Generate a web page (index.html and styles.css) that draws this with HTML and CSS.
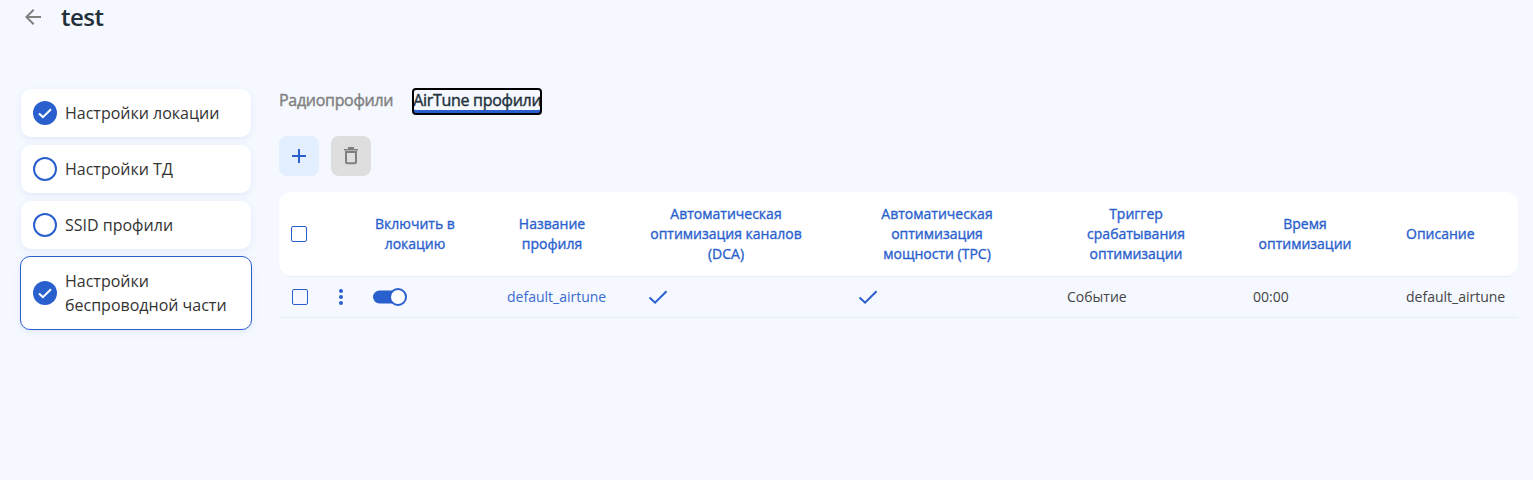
FILE: index.html
```html
<!DOCTYPE html>
<html lang="ru">
<head>
<meta charset="utf-8">
<title>test</title>
<link rel="stylesheet" href="styles.css">
</head>
<body>
<header class="top">
  <svg class="back" viewBox="0 0 24 24" width="24" height="24"><path d="M20 11H7.83l5.59-5.59L12 4l-8 8 8 8 1.41-1.41L7.83 13H20v-2z"/></svg>
  <h1 class="title">test</h1>
</header>
<div class="main">
  <nav class="side">
    <div class="step">
      <svg class="mark" viewBox="0 0 24 24" width="24" height="24"><circle cx="12" cy="12" r="12" class="fill"/><path d="M6 12.6l3.9 3.5 8.1-7.8" class="tick"/></svg>
      <span>Настройки локации</span>
    </div>
    <div class="step">
      <svg class="mark" viewBox="0 0 24 24" width="24" height="24"><circle cx="12" cy="12" r="11" class="ring"/></svg>
      <span>Настройки ТД</span>
    </div>
    <div class="step">
      <svg class="mark" viewBox="0 0 24 24" width="24" height="24"><circle cx="12" cy="12" r="11" class="ring"/></svg>
      <span>SSID профили</span>
    </div>
    <div class="step step-active">
      <svg class="mark" viewBox="0 0 24 24" width="24" height="24"><circle cx="12" cy="12" r="12" class="fill"/><path d="M6 12.6l3.9 3.5 8.1-7.8" class="tick"/></svg>
      <span>Настройки беспроводной части</span>
    </div>
  </nav>
  <section class="content">
    <div class="tabs">
      <span class="tab">Радиопрофили</span>
      <span class="tab tab-active">AirTune профили</span>
    </div>
    <div class="actions">
      <button class="btn btn-add" type="button"><svg viewBox="0 0 16 16" width="16" height="16"><path d="M8 1v14M1 8h14" class="plus"/></svg></button>
      <button class="btn btn-del" type="button"><svg viewBox="0 0 24 24" width="24" height="24"><path d="M5 5h14v1.6H5zM9 3h6v2H9z" class="bin-top"/><path d="M7 8h10v10.3a1 1 0 0 1-1 1H8a1 1 0 0 1-1-1z" class="bin"/></svg></button>
    </div>
    <table class="grid">
      <colgroup>
        <col class="c1"><col class="c2"><col class="c3"><col class="c4"><col class="c5"><col class="c6"><col class="c7"><col class="c8"><col class="c9">
      </colgroup>
      <thead>
        <tr>
          <th class="first"><span class="box box-head"></span></th>
          <th></th>
          <th>Включить в<br>локацию</th>
          <th>Название<br>профиля</th>
          <th>Автоматическая<br>оптимизация каналов<br>(DCA)</th>
          <th>Автоматическая<br>оптимизация<br>мощности (TPC)</th>
          <th>Триггер<br>срабатывания<br>оптимизации</th>
          <th>Время<br>оптимизации</th>
          <th class="last">Описание</th>
        </tr>
      </thead>
      <tbody>
        <tr>
          <td><span class="box box-row"></span></td>
          <td class="dots-cell"><svg viewBox="0 0 4 16" width="4" height="16"><circle cx="2" cy="2" r="2" class="dot"/><circle cx="2" cy="8" r="2" class="dot"/><circle cx="2" cy="14" r="2" class="dot"/></svg></td>
          <td class="toggle-cell"><svg viewBox="0 0 34 20" width="34" height="20"><rect x="0" y="3.5" width="28" height="13" rx="6.5" class="track"/><circle cx="25" cy="10" r="8" class="knob"/></svg></td>
          <td class="link p-name">default_airtune</td>
          <td class="p-dca"><svg class="ok" viewBox="0 0 20 16" width="20" height="16"><path d="M1.5 8.5l5.6 5.2L18.5 2.2"/></svg></td>
          <td class="p-tpc"><svg class="ok" viewBox="0 0 20 16" width="20" height="16"><path d="M1.5 8.5l5.6 5.2L18.5 2.2"/></svg></td>
          <td class="p-trig">Событие</td>
          <td class="p-time">00:00</td>
          <td class="p-desc">default_airtune</td>
        </tr>
      </tbody>
    </table>
  </section>
</div>
</body>
</html>
```
FILE: styles.css
```css
* { box-sizing: border-box; }
html, body { margin: 0; height: 100%; }
body {
  background: #f5f8ff;
  color: #333;
  font-family: "Open Sans", sans-serif;
  overflow: hidden;
}
.top {
  display: flex;
  align-items: center;
  gap: 16px;
  height: 34px;
  padding-left: 21px;
}
.back { fill: #808080; flex: none; }
.title {
  margin: 0;
  font-size: 24px;
  line-height: 34px;
  font-weight: 600;
  letter-spacing: -0.5px;
  color: #22303a;
}
.main {
  display: flex;
  margin-top: 55px;
  padding-left: 21px;
  padding-right: 15px;
}
.side {
  flex: none;
  width: 230px;
  display: flex;
  flex-direction: column;
  gap: 8px;
  margin-right: 28px;
}
.step {
  display: flex;
  align-items: center;
  gap: 8px;
  min-height: 48px;
  padding: 0 12px;
  background: #fff;
  border-radius: 10px;
  box-shadow: 0 2px 6px rgba(42, 95, 206, .1);
  font-size: 16px;
  line-height: 24px;
}
.step-active {
  min-height: 74px;
  margin: -1px -1px 0;
  padding: 0 12px;
  border: 1px solid #2a5fce;
}
.mark { flex: none; }
.fill { fill: #2a5fce; }
.ring { fill: none; stroke: #2a5fce; stroke-width: 2; }
.tick { fill: none; stroke: #fff; stroke-width: 2; }
.content { flex: 1; min-width: 0; }
.tabs {
  display: flex;
  gap: 20px;
  height: 25px;
  align-items: center;
}
.tab {
  font-size: 16px;
  line-height: 23px;
  height: 25px;
  font-weight: 500;
  letter-spacing: -0.3px;
  -webkit-text-stroke: 0.4px currentColor;
  color: #808080;
}
.tab-active {
  color: #22303a;
  outline: 2px solid #000;
  outline-offset: -1px;
  border-radius: 3px;
  box-shadow: inset 0 -4px 0 #2a5fce;
}
.actions {
  display: flex;
  gap: 12px;
  margin-top: 22px;
}
.btn {
  display: flex;
  align-items: center;
  justify-content: center;
  width: 40px;
  height: 40px;
  padding: 0;
  border: 0;
  border-radius: 8px;
}
.btn-add { background: #e3eefe; }
.btn-del { background: #dedede; }
.plus { fill: none; stroke: #2a5fce; stroke-width: 2; }
.bin-top { fill: #808080; }
.bin { fill: none; stroke: #808080; stroke-width: 2; }
.grid {
  width: 1239px;
  margin-top: 16px;
  table-layout: fixed;
  border-collapse: separate;
  border-spacing: 0;
}
.c1 { width: 46px; }
.c2 { width: 32px; }
.c3 { width: 116px; }
.c4 { width: 158px; }
.c5 { width: 190px; }
.c6 { width: 232px; }
.c7 { width: 166px; }
.c8 { width: 172px; }
.c9 { width: 127px; }
th {
  height: 85px;
  padding: 0;
  background: #fff;
  border-bottom: 1px solid #e6ecf8;
  color: #2a5fce;
  font-size: 14px;
  line-height: 20px;
  font-weight: 500;
  -webkit-text-stroke: 0.35px currentColor;
  text-align: center;
  vertical-align: middle;
}
th.first { border-top-left-radius: 12px; border-bottom-left-radius: 12px; text-align: left; padding-left: 12px; }
th.last { border-top-right-radius: 12px; border-bottom-right-radius: 12px; text-align: left; padding-left: 15px; }
td {
  height: 41px;
  padding: 0;
  border-bottom: 1px solid #e6ecf8;
  color: #444;
  font-size: 14px;
  line-height: 20px;
  vertical-align: middle;
}
td svg { display: block; }
.box {
  display: block;
  width: 16px;
  height: 16px;
  border: 1.5px solid #2a5fce;
  border-radius: 2px;
}
.box-row { margin-left: 13px; }
.dots-cell { padding-left: 14px; }
.dot { fill: #2a5fce; }
.toggle-cell { padding-left: 16px; }
.track { fill: #2a5fce; }
.knob { fill: #fff; stroke: #2a5fce; stroke-width: 2; }
td.link { color: #3a6bd0; }
.p-name { padding-left: 34px; }
.p-dca { padding-left: 17px; }
.p-tpc { padding-left: 37px; }
.p-trig { padding-left: 14px; }
.p-time { padding-left: 34px; }
.p-desc { padding-left: 15px; white-space: nowrap; }
.ok { fill: none; stroke: #2a5fce; stroke-width: 2; }
```
